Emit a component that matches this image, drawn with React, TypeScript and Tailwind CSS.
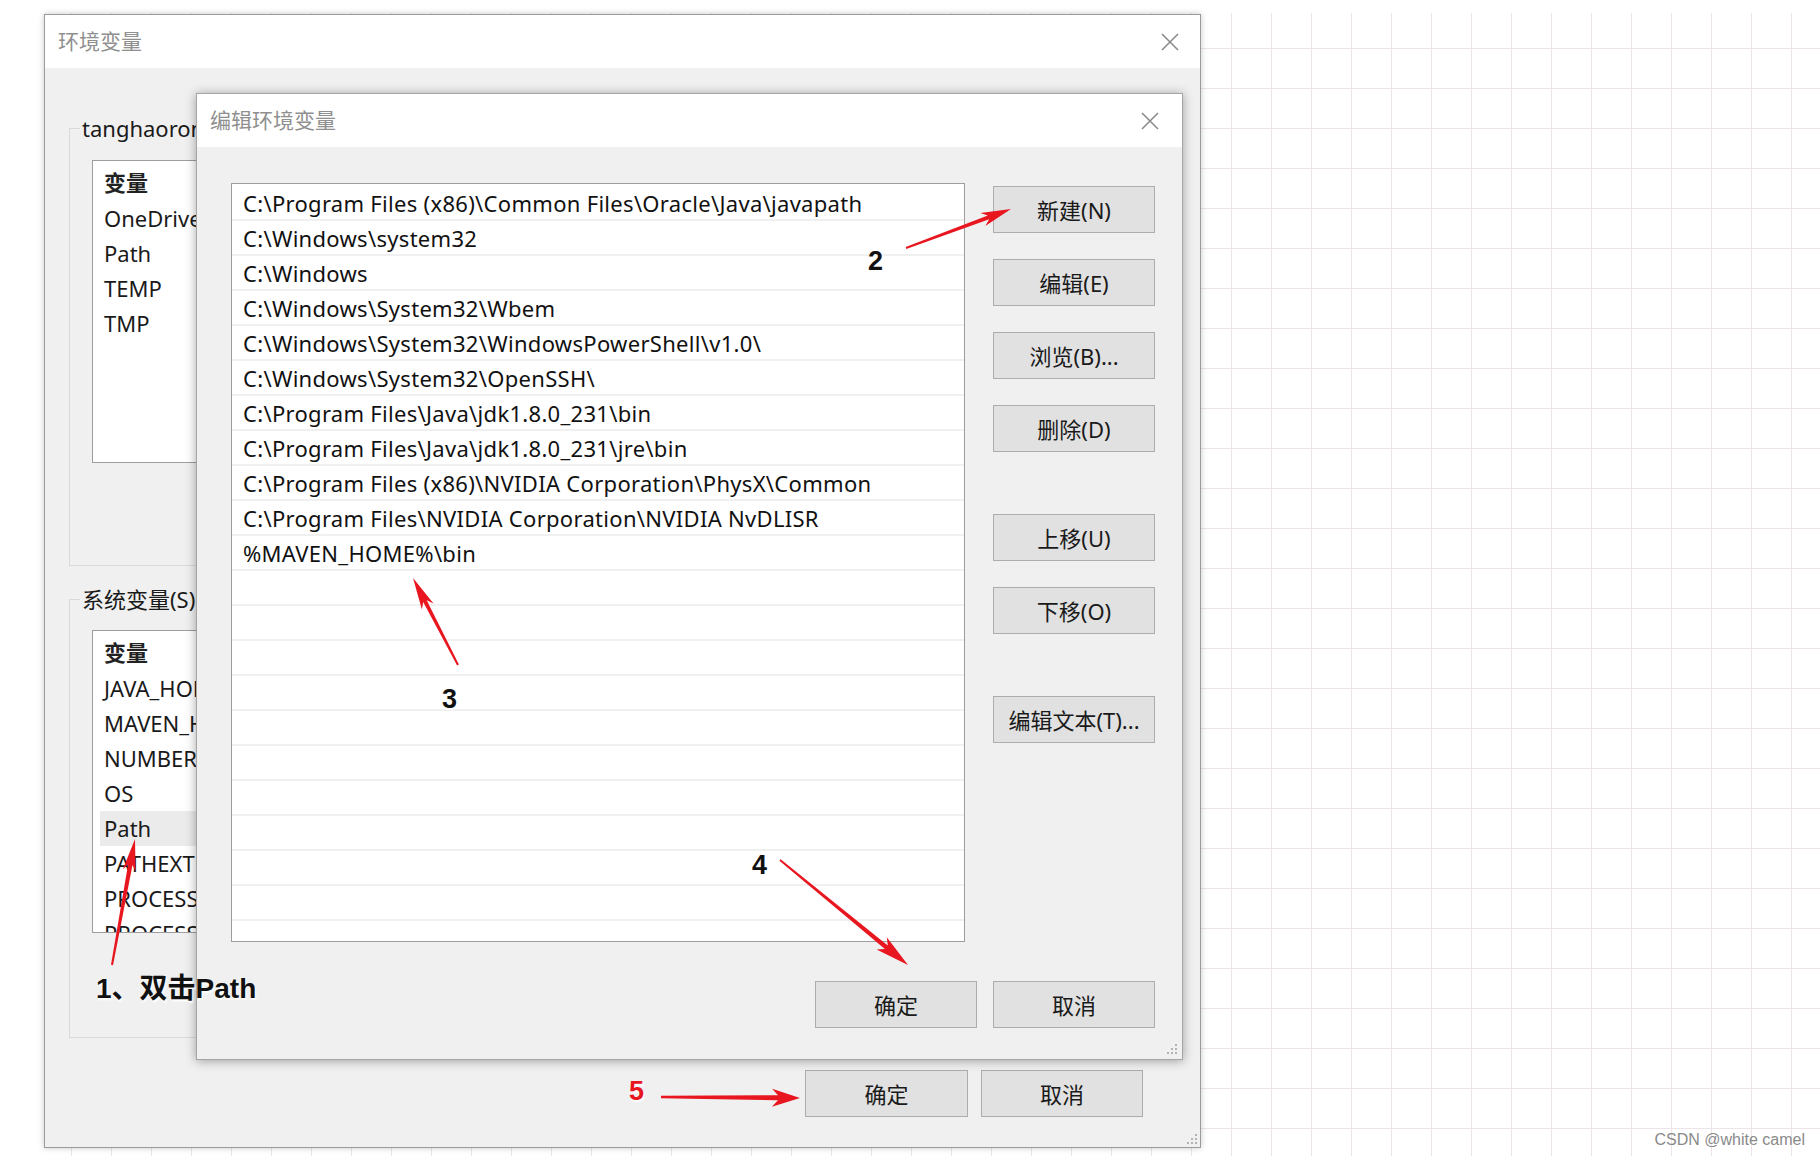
import React from "react";

type P = [number, number];

const pathRows = [
  "C:\\Program Files (x86)\\Common Files\\Oracle\\Java\\javapath",
  "C:\\Windows\\system32",
  "C:\\Windows",
  "C:\\Windows\\System32\\Wbem",
  "C:\\Windows\\System32\\WindowsPowerShell\\v1.0\\",
  "C:\\Windows\\System32\\OpenSSH\\",
  "C:\\Program Files\\Java\\jdk1.8.0_231\\bin",
  "C:\\Program Files\\Java\\jdk1.8.0_231\\jre\\bin",
  "C:\\Program Files (x86)\\NVIDIA Corporation\\PhysX\\Common",
  "C:\\Program Files\\NVIDIA Corporation\\NVIDIA NvDLISR",
  "%MAVEN_HOME%\\bin",
];
const rows = [...pathRows, ...Array(11).fill("")];

const userVars = ["OneDrive", "Path", "TEMP", "TMP"];
const sysVars = [
  "JAVA_HOME",
  "MAVEN_HOME",
  "NUMBER_OF_PROCESSORS",
  "OS",
  "Path",
  "PATHEXT",
  "PROCESSOR_ARCHITECTURE",
  "PROCESSOR_IDENTIFIER",
];

// tapered red arrow, like the hand-drawn ones in the screenshot
function arrowPoints(tail: P, tip: P, w0: number, w1: number, hl: number, hw: number) {
  const dx = tip[0] - tail[0];
  const dy = tip[1] - tail[1];
  const len = Math.hypot(dx, dy);
  const ux = dx / len;
  const uy = dy / len;
  const nx = -uy;
  const ny = ux;
  const bx = tip[0] - ux * hl;
  const by = tip[1] - uy * hl;
  const back = 4;
  const pts: P[] = [
    [tail[0] + (nx * w0) / 2, tail[1] + (ny * w0) / 2],
    [bx + (nx * w1) / 2 + ux * 2, by + (ny * w1) / 2 + uy * 2],
    [bx - ux * back + (nx * hw) / 2, by - uy * back + (ny * hw) / 2],
    tip,
    [bx - ux * back - (nx * hw) / 2, by - uy * back - (ny * hw) / 2],
    [bx - (nx * w1) / 2 + ux * 2, by - (ny * w1) / 2 + uy * 2],
    [tail[0] - (nx * w0) / 2, tail[1] - (ny * w0) / 2],
  ];
  return pts.map((p) => p.map((v) => v.toFixed(1)).join(",")).join(" ");
}

const arrows: [P, P, number, number, number, number][] = [
  [[112, 965], [135, 839], 2, 4.5, 28, 13],
  [[906, 248], [1011, 209], 2, 4, 26, 14],
  [[458, 665], [413, 578], 2, 4, 28, 13],
  [[780, 860], [908, 965], 2, 4.5, 30, 16],
  [[661, 1097], [800, 1098], 2.5, 5, 24, 18],
];

const CloseX = () => (
  <svg width="18" height="18" viewBox="0 0 18 18">
    <path d="M1 1L17 17M17 1L1 17" stroke="#8a8a8a" strokeWidth="1.6" />
  </svg>
);

const Grip = () => (
  <svg width="12" height="12" viewBox="0 0 12 12">
    {[
      [9, 1],
      [5, 5],
      [9, 5],
      [1, 9],
      [5, 9],
      [9, 9],
    ].map(([x, y], i) => (
      <rect key={i} x={x} y={y} width="2" height="2" fill="#b3b3b3" />
    ))}
  </svg>
);

const WinButton = ({ label, w = "w-[162px]" }: { label: string; w?: string }) => (
  <div
    className={`${w} h-[47px] flex items-center justify-center bg-[#e1e1e1] border border-[#adadad] text-[22px] text-[#1a1a1a] leading-none`}
  >
    {label}
  </div>
);

const VarList = ({ items, selected }: { items: string[]; selected: string }) => (
  <div className="mx-[22px] h-[303px] bg-white border border-[#9d9d9d] pt-[2px] overflow-hidden">
    <div className="h-[38px] mx-[7px] pl-[4px] flex items-center text-[22px] font-semibold text-[#222]">
      变量
    </div>
    {items.map((v) => (
      <div
        key={v}
        className={`h-[35px] mx-[7px] pl-[4px] flex items-center text-[22px] text-[#1a1a1a] whitespace-nowrap ${
          v === selected ? "bg-[#ebebeb]" : ""
        }`}
      >
        {v}
      </div>
    ))}
  </div>
);

const App = () => {
  return (
    <div className="relative w-[1820px] h-[1156px] overflow-hidden bg-white pt-[14px] pl-[44px] font-['Noto_Sans','Noto_Sans_CJK_SC',sans-serif]">
      {/* paper grid behind the screenshot */}
      <div className="absolute left-[51px] top-[13px] right-0 bottom-0 bg-[linear-gradient(to_right,#ece4e8_1px,transparent_1px),linear-gradient(to_bottom,#ece4e8_1px,transparent_1px)] bg-[size:40px_40px] bg-[position:20px_35px]" />

      {/* 环境变量 */}
      <div className="relative w-[1157px] h-[1134px] flex flex-col border border-[#9b9b9b] bg-[#f0f0f0] shadow-[0_0_6px_rgba(0,0,0,0.22)]">
        <div className="h-[53px] shrink-0 bg-white flex items-center justify-between pl-[13px] pr-[21px]">
          <span className="text-[21px] text-[#8f8f8f]">环境变量</span>
          <CloseX />
        </div>
        <div className="flex-1 flex flex-col px-[24px]">
          <fieldset className="mt-[45px] h-[453px] min-w-0 border border-[#d9d9d9]">
            <legend className="ml-[10px] px-[2px] text-[22px] leading-[30px] text-[#1a1a1a] whitespace-nowrap">
              tanghaorong 的用户变量(U)
            </legend>
            <div className="mt-[17px]">
              <VarList items={userVars} selected="" />
            </div>
          </fieldset>
          <fieldset className="mt-[18px] h-[454px] min-w-0 border border-[#d9d9d9]">
            <legend className="ml-[10px] px-[2px] text-[22px] leading-[30px] text-[#1a1a1a] whitespace-nowrap">
              系统变量(S)
            </legend>
            <div className="mt-[16px]">
              <VarList items={sysVars} selected="Path" />
            </div>
          </fieldset>
          <div className="mt-[32px] mr-[33px] flex justify-end gap-[13px]">
            <WinButton label="确定" w="w-[163px]" />
            <WinButton label="取消" />
          </div>
        </div>
        <div className="absolute right-[2px] bottom-[2px]">
          <Grip />
        </div>

        {/* 编辑环境变量 window on top */}
        <div className="absolute left-[151px] top-[78px] w-[987px] h-[967px] flex flex-col border border-[#a5a5a5] bg-[#f0f0f0] shadow-[0_1px_10px_rgba(0,0,0,0.35)]">
          <div className="h-[53px] shrink-0 bg-white flex items-center justify-between pl-[13px] pr-[23px]">
            <span className="text-[21px] text-[#8f8f8f]">编辑环境变量</span>
            <CloseX />
          </div>
          <div className="flex-1 flex flex-col pl-[34px] pt-[36px]">
            <div className="flex gap-[28px]">
              <div className="w-[734px] h-[759px] bg-white border border-[#9d9d9d] pt-[2px] overflow-hidden">
                {rows.map((r, i) => (
                  <div
                    key={i}
                    className="h-[35px] border-b-2 border-[#f0f0f0] pl-[11px] pt-[2px] flex items-center text-[22px] tracking-[0.3px] text-[#111] whitespace-nowrap"
                  >
                    {r}
                  </div>
                ))}
              </div>
              <div className="w-[162px] pt-[3px] flex flex-col gap-[62px]">
                <div className="flex flex-col gap-[26px]">
                  <WinButton label="新建(N)" />
                  <WinButton label="编辑(E)" />
                  <WinButton label="浏览(B)..." />
                  <WinButton label="删除(D)" />
                </div>
                <div className="flex flex-col gap-[26px]">
                  <WinButton label="上移(U)" />
                  <WinButton label="下移(O)" />
                </div>
                <WinButton label="编辑文本(T)..." />
              </div>
            </div>
            <div className="mt-[39px] pr-[27px] flex justify-end gap-[16px]">
              <WinButton label="确定" />
              <WinButton label="取消" />
            </div>
          </div>
          <div className="absolute right-[4px] bottom-[4px]">
            <Grip />
          </div>
        </div>
      </div>

      {/* annotations */}
      <svg
        className="absolute left-0 top-0 pointer-events-none"
        width="1820"
        height="1156"
        viewBox="0 0 1820 1156"
      >
        {arrows.map((a, i) => (
          <polygon key={i} points={arrowPoints(...a)} fill="#e8161f" />
        ))}
      </svg>
      <div className="absolute left-[96px] top-[972px] text-[28px] leading-[34px] font-bold text-[#111] whitespace-nowrap font-['Liberation_Sans','Noto_Sans_CJK_SC',sans-serif] [text-shadow:1px_2px_2px_#ffffff]">
        1、双击Path
      </div>
      <div className="absolute left-[868px] top-[244px] text-[27px] leading-[34px] font-bold text-[#111] font-['Liberation_Sans',sans-serif] [text-shadow:1px_2px_2px_#ffffff]">
        2
      </div>
      <div className="absolute left-[442px] top-[682px] text-[27px] leading-[34px] font-bold text-[#111] font-['Liberation_Sans',sans-serif] [text-shadow:1px_2px_2px_#ffffff]">
        3
      </div>
      <div className="absolute left-[752px] top-[848px] text-[27px] leading-[34px] font-bold text-[#111] font-['Liberation_Sans',sans-serif] [text-shadow:1px_2px_2px_#ffffff]">
        4
      </div>
      <div className="absolute left-[629px] top-[1074px] text-[27px] leading-[34px] font-bold text-[#e8161f] font-['Liberation_Sans',sans-serif] [text-shadow:1px_2px_2px_#ffffff]">
        5
      </div>
      <div className="absolute right-[15px] top-[1130px] text-[16px] leading-[20px] text-[#8a8a8a] font-['Liberation_Sans',sans-serif]">
        CSDN @white camel
      </div>
    </div>
  );
};

export default App;
